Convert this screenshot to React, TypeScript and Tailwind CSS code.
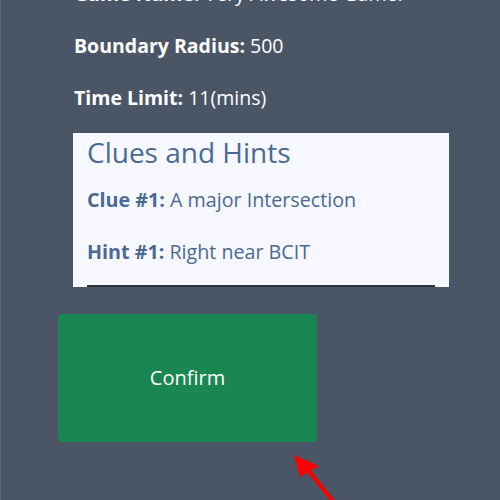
export default function App() {
  return (
    <div
      className="relative h-[500px] w-[500px] overflow-hidden bg-[#4a5666] border-l border-[#5d6878]"
      style={{ fontFamily: '"Open Sans", "Noto Sans", sans-serif' }}
    >
      <div className="pl-[73px] -mt-[20px] text-white text-[19.5px]">
        <p className="leading-[27px] mb-[25px]">
          <span className="font-bold">Game Name:</span> Very Awesome Game!
        </p>
        <p className="leading-[27px] mb-[25px]">
          <span className="font-bold">Boundary Radius:</span> 500
        </p>
        <p className="leading-[27px]">
          <span className="font-bold">Time Limit:</span> 11(mins)
        </p>
      </div>

      <div className="ml-[72px] mt-[22px] w-[376px] h-[154px] overflow-hidden bg-[#f7f8ff] px-[14px] text-[#4b6a93]">
        <h2 className="text-[28px] leading-[38px]">Clues and Hints</h2>
        <p className="text-[19.7px] leading-[28px] mt-[15px]">
          <span className="font-bold">Clue #1:</span> A major Intersection
        </p>
        <p className="text-[19.7px] leading-[28px] mt-[24px]">
          <span className="font-bold">Hint #1:</span> Right near BCIT
        </p>
        <div className="mt-[11px] border-b-2 border-[#2f3540] h-[10px]" />
      </div>

      <button className="ml-[57px] mt-[27px] flex h-[128px] w-[259px] items-center justify-center rounded-[4px] bg-[#1a8651] text-[20px] text-white">
        Confirm
      </button>

      <svg className="absolute left-[285px] top-[450px]" width="60" height="55" viewBox="0 0 60 55">
        <polygon points="8,5 14,27 33,16" fill="#ff0000" />
        <line x1="22" y1="20" x2="50" y2="55" stroke="#ff0000" strokeWidth="4" />
      </svg>
    </div>
  );
}
